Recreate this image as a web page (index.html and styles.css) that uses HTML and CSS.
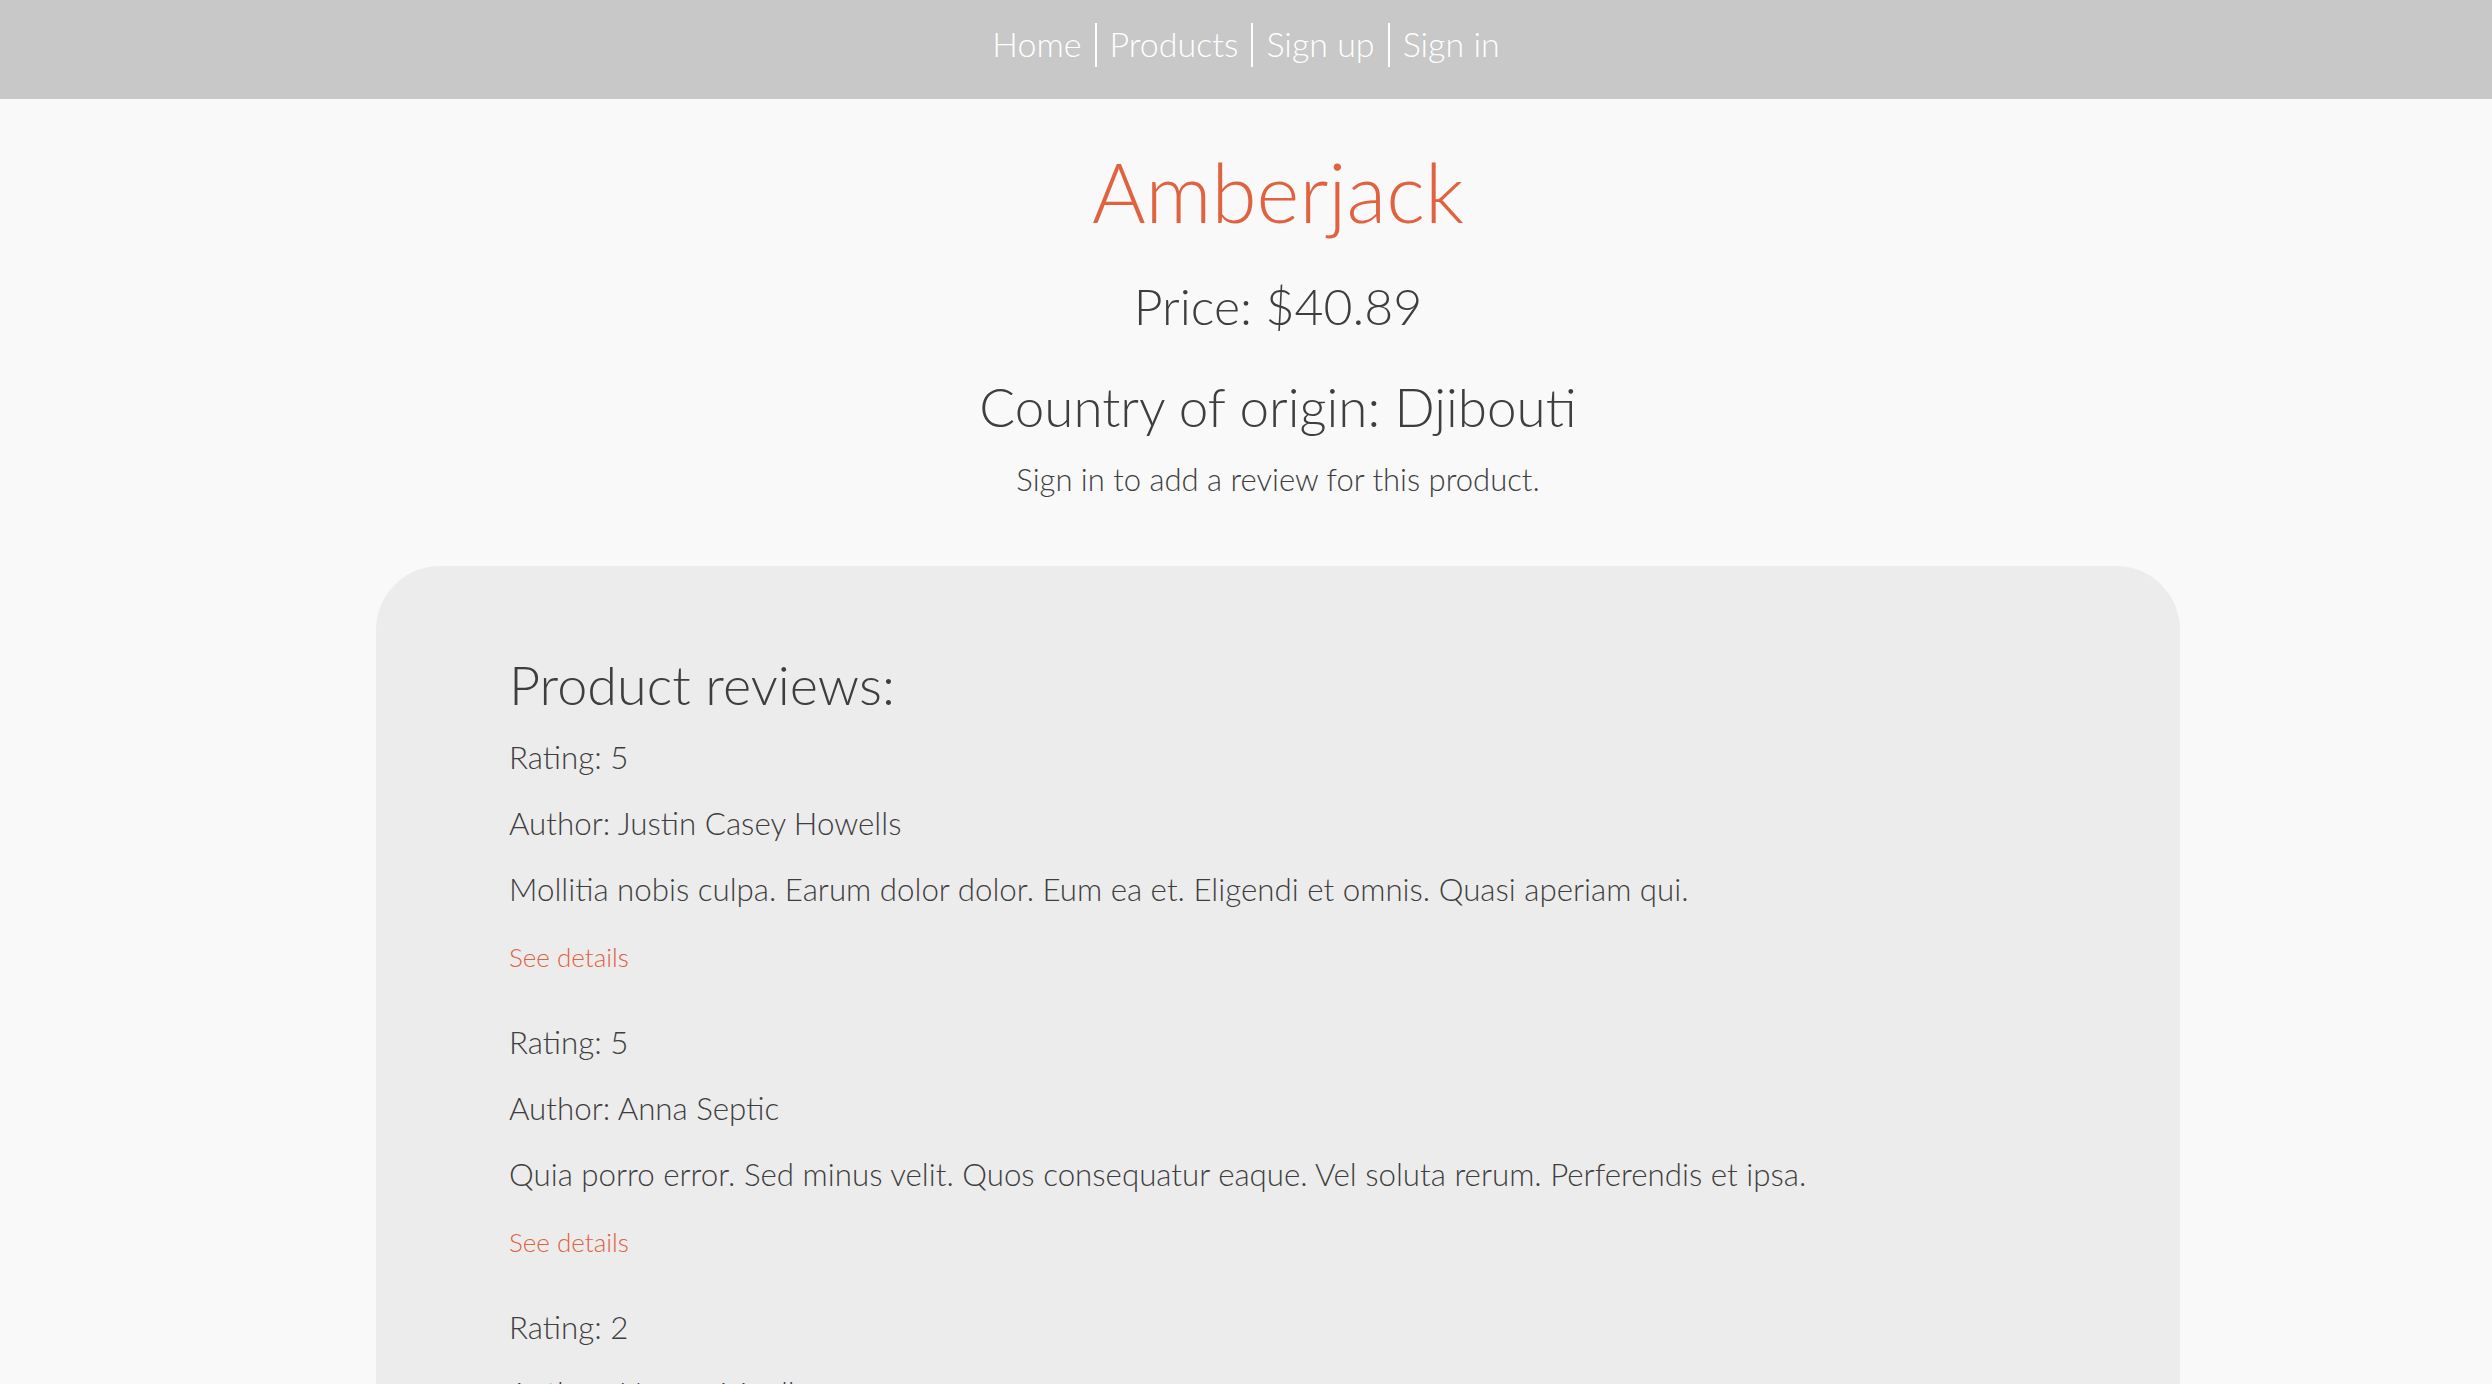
FILE: index.html
```html
<!DOCTYPE html>
<html lang="en">
<head>
<meta charset="utf-8">
<title>Amberjack</title>
<link rel="stylesheet" href="styles.css">
</head>
<body>
<header class="nav">
  <a class="nav-link" href="#">Home</a>
  <a class="nav-link" href="#">Products</a>
  <a class="nav-link" href="#">Sign up</a>
  <a class="nav-link" href="#">Sign in</a>
</header>
<main class="main">
  <h1 class="title">Amberjack</h1>
  <h3 class="price">Price: $40.89</h3>
  <h2 class="origin">Country of origin: Djibouti</h2>
  <p class="hint">Sign in to add a review for this product.</p>
  <section class="reviews">
    <h2 class="reviews-title">Product reviews:</h2>
    <article class="review">
      <p class="line">Rating: 5</p>
      <p class="line">Author: Justin Casey Howells</p>
      <p class="line">Mollitia nobis culpa. Earum dolor dolor. Eum ea et. Eligendi et omnis. Quasi aperiam qui.</p>
      <a class="details" href="#">See details</a>
    </article>
    <article class="review">
      <p class="line">Rating: 5</p>
      <p class="line">Author: Anna Septic</p>
      <p class="line">Quia porro error. Sed minus velit. Quos consequatur eaque. Vel soluta rerum. Perferendis et ipsa.</p>
      <a class="details" href="#">See details</a>
    </article>
    <article class="review">
      <p class="line">Rating: 2</p>
      <p class="line">Author: Norma Mueller</p>
      <p class="line">Sint eos dolorum. Aut vero quia. Qui nihil consequatur. Ipsum ut est. Dolores id quod.</p>
      <a class="details" href="#">See details</a>
    </article>
  </section>
</main>
</body>
</html>
```

FILE: styles.css
```css
html, body {
  margin: 0;
  padding: 0;
}
body {
  background: #f9f9f9;
  color: #3e3e3e;
  font-family: Lato, "Liberation Sans", sans-serif;
  font-weight: 300;
}
.nav {
  height: 99px;
  background: #c8c8c8;
  display: flex;
  justify-content: center;
  align-items: flex-start;
  padding-top: 23px;
  box-sizing: border-box;
}
.nav-link {
  color: #ffffff;
  text-decoration: none;
  font-size: 34px;
  line-height: 42px;
  padding: 0 13px 2px;
  border-left: 2px solid #ffffff;
}
.nav-link:first-child {
  border-left: none;
}
.main {
  padding-left: 64px;
  display: flex;
  flex-direction: column;
  align-items: stretch;
}
.title, .price, .origin, .hint {
  text-align: center;
  font-weight: 300;
  margin: 0;
  line-height: 1.2;
}
.title {
  color: #e0623f;
  font-size: 82px;
  margin-top: 43px;
}
.price {
  font-size: 50px;
  margin-top: 36px;
}
.origin {
  font-size: 53px;
  margin-top: 39px;
}
.hint {
  font-size: 31px;
  margin-top: 22px;
}
.reviews {
  margin: 68px 312px 0;
  background: #ececec;
  border-radius: 64px;
  padding: 87px 133px 60px;
  min-height: 900px;
}
.reviews-title {
  margin: 0 0 6px;
  font-size: 54px;
  font-weight: 300;
  line-height: 1.2;
}
.review {
  display: flex;
  flex-direction: column;
  align-items: flex-start;
  margin-bottom: 19px;
}
.line {
  margin: 0;
  font-size: 31.3px;
  line-height: 66px;
}
.details {
  color: #e0623f;
  text-decoration: none;
  font-size: 26px;
  line-height: 66px;
  margin-top: 2px;
}
```
